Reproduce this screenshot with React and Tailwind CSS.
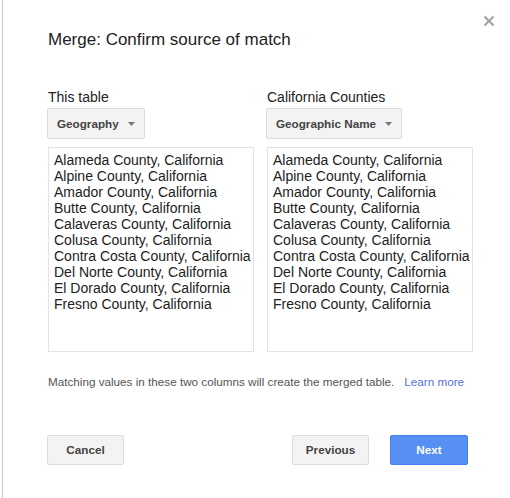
const counties = [
  'Alameda County, California',
  'Alpine County, California',
  'Amador County, California',
  'Butte County, California',
  'Calaveras County, California',
  'Colusa County, California',
  'Contra Costa County, California',
  'Del Norte County, California',
  'El Dorado County, California',
  'Fresno County, California',
];

const Arrow = () => (
  <svg width="7" height="4" viewBox="0 0 7 4" className="shrink-0">
    <path d="M0 0 L7 0 L3.5 4 Z" fill="#777" />
  </svg>
);

const Dropdown = ({ label }) => (
  <button className="-ml-px self-start h-[31px] flex items-center gap-[9px] pl-[9px] pr-[9px] border border-[#dcdcdc] bg-[#f3f3f3] rounded-[2px] text-[11.7px] font-bold text-[#444]">
    {label}
    <Arrow />
  </button>
);

const Column = ({ title, field }) => (
  <div className="flex flex-col">
    <div className="text-[14px] leading-4 text-[#222]">{title}</div>
    <div className="mt-[3px] flex">
      <Dropdown label={field} />
    </div>
    <div className="mt-[8px] h-[205px] border border-[#e3e3e3] pl-[5px] pt-[4px] text-[14px] leading-4 text-[#222]">
      {counties.map((c) => (
        <div key={c} className="whitespace-nowrap">{c}</div>
      ))}
    </div>
  </div>
);

export default function App() {
  return (
    <div
      className="w-[510px] h-[498px] bg-white overflow-hidden"
      style={{ fontFamily: '"Liberation Sans", Arial, sans-serif' }}
    >
      <div className="relative ml-[2px] h-full border-l border-[#c6c6c6] pl-[45px] pt-[30px]">
        <button className="absolute top-[14px] right-[15px] w-[13px] h-[13px] flex items-center justify-center">
          <svg width="12" height="12" viewBox="0 0 12 12">
            <path d="M1.5 1.5 L10.5 10.5 M10.5 1.5 L1.5 10.5" stroke="#a3a3a3" strokeWidth="2.2" />
          </svg>
        </button>

        <h1 className="text-[17px] leading-5 text-[#222]">Merge: Confirm source of match</h1>

        <div className="mt-[39px] grid grid-cols-[206px_206px] gap-x-[13px]">
          <Column title="This table" field="Geography" />
          <Column title="California Counties" field="Geographic Name" />
        </div>

        <p className="mt-[22px] text-[11.7px] leading-4 text-[#555]">
          Matching values in these two columns will create the merged table.
          <a href="#" className="ml-[10px] text-[#5571d9]">Learn more</a>
        </p>

        <div className="-ml-px mt-[45px] w-[421px] flex items-center">
          <button className="w-[77px] h-[30px] border border-[#dcdcdc] bg-[#f3f3f3] rounded-[2px] text-[11.7px] font-bold text-[#444]">
            Cancel
          </button>
          <div className="ml-auto flex gap-[21px]">
            <button className="w-[77px] h-[30px] border border-[#dcdcdc] bg-[#f3f3f3] rounded-[2px] text-[11.7px] font-bold text-[#444]">
              Previous
            </button>
            <button className="w-[78px] h-[30px] border border-[#3f80ee] bg-[#5590f2] rounded-[2px] text-[11.7px] font-bold text-white">
              Next
            </button>
          </div>
        </div>
      </div>
    </div>
  );
}
